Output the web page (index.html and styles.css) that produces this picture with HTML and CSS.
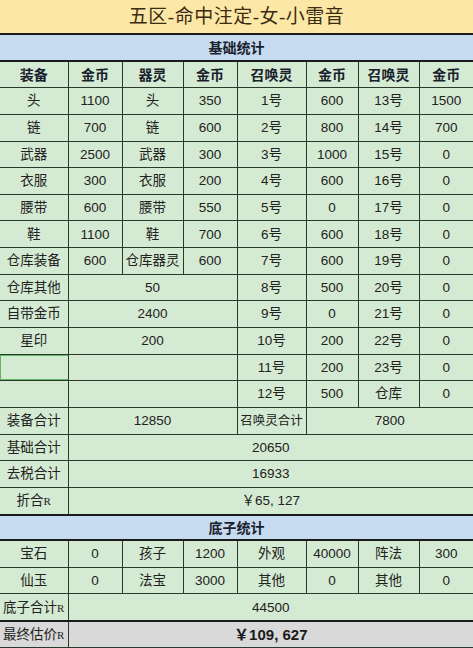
FILE: index.html
```html
<!DOCTYPE html>
<html lang="zh">
<head>
<meta charset="utf-8">
<title>五区-命中注定-女-小雷音</title>
<link rel="stylesheet" href="styles.css">
</head>
<body>
<table class="sheet">
<colgroup>
<col class="c68"><col class="c54"><col class="c61"><col class="c54"><col class="c69"><col class="c52"><col class="c61"><col class="c54">
</colgroup>
<tbody>
<tr class="r-title"><td colspan="8" class="title">五区-命中注定-女-小雷音</td></tr>
<tr class="r-sec"><td colspan="8" class="sec">基础统计</td></tr>
<tr class="r head"><td>装备</td><td>金币</td><td>器灵</td><td>金币</td><td>召唤灵</td><td>金币</td><td>召唤灵</td><td>金币</td></tr>
<tr class="r"><td>头</td><td>1100</td><td>头</td><td>350</td><td>1号</td><td>600</td><td>13号</td><td>1500</td></tr>
<tr class="r"><td>链</td><td>700</td><td>链</td><td>600</td><td>2号</td><td>800</td><td>14号</td><td>700</td></tr>
<tr class="r"><td>武器</td><td>2500</td><td>武器</td><td>300</td><td>3号</td><td>1000</td><td>15号</td><td>0</td></tr>
<tr class="r"><td>衣服</td><td>300</td><td>衣服</td><td>200</td><td>4号</td><td>600</td><td>16号</td><td>0</td></tr>
<tr class="r"><td>腰带</td><td>600</td><td>腰带</td><td>550</td><td>5号</td><td>0</td><td>17号</td><td>0</td></tr>
<tr class="r"><td>鞋</td><td>1100</td><td>鞋</td><td>700</td><td>6号</td><td>600</td><td>18号</td><td>0</td></tr>
<tr class="r"><td>仓库装备</td><td>600</td><td>仓库器灵</td><td>600</td><td>7号</td><td>600</td><td>19号</td><td>0</td></tr>
<tr class="r"><td>仓库其他</td><td colspan="3">50</td><td>8号</td><td>500</td><td>20号</td><td>0</td></tr>
<tr class="r"><td>自带金币</td><td colspan="3">2400</td><td>9号</td><td>0</td><td>21号</td><td>0</td></tr>
<tr class="r"><td>星印</td><td colspan="3">200</td><td>10号</td><td>200</td><td>22号</td><td>0</td></tr>
<tr class="r"><td class="sel"></td><td colspan="3"></td><td>11号</td><td>200</td><td>23号</td><td>0</td></tr>
<tr class="r"><td></td><td colspan="3"></td><td>12号</td><td>500</td><td>仓库</td><td>0</td></tr>
<tr class="r"><td>装备合计</td><td colspan="3">12850</td><td class="tight">召唤灵合计</td><td colspan="3">7800</td></tr>
<tr class="r"><td>基础合计</td><td colspan="7">20650</td></tr>
<tr class="r"><td>去税合计</td><td colspan="7">16933</td></tr>
<tr class="r"><td>折合<span class="rr">R</span></td><td colspan="7">￥65, 127</td></tr>
<tr class="r-sec2"><td colspan="8" class="sec">底子统计</td></tr>
<tr class="r"><td>宝石</td><td>0</td><td>孩子</td><td>1200</td><td>外观</td><td>40000</td><td>阵法</td><td>300</td></tr>
<tr class="r"><td>仙玉</td><td>0</td><td>法宝</td><td>3000</td><td>其他</td><td>0</td><td>其他</td><td>0</td></tr>
<tr class="r"><td>底子合计<span class="rr">R</span></td><td colspan="7">44500</td></tr>
<tr class="r final"><td>最终估价<span class="rr">R</span></td><td colspan="7" class="total">￥109, 627</td></tr>
</tbody>
</table>
</body>
</html>
```
FILE: styles.css
```css
html, body {
  margin: 0;
  padding: 0;
  background: #d5ead3;
}
.sheet {
  width: 473px;
  border-collapse: collapse;
  table-layout: fixed;
  font-family: "Liberation Sans", "Noto Sans CJK SC", sans-serif;
  font-size: 13.5px;
  color: #222;
}
.c68 { width: 68px; }
.c54 { width: 54px; }
.c61 { width: 61px; }
.c69 { width: 69px; }
.c52 { width: 52px; }
.sheet td {
  border: 1px solid #2a3a2a;
  padding: 0;
  text-align: center;
  vertical-align: middle;
  line-height: 1;
  white-space: nowrap;
  overflow: hidden;
  background: #d5ead3;
}
.sheet tr td:first-child { border-left: none; }
.sheet tr td:last-child { border-right: none; }
.r td { height: 25.65px; }
.r-title td {
  height: 33px;
  background: #fde7a7;
  border-top: none;
  border-bottom: 2px solid #1a1a1a;
  font-family: "Liberation Serif", "Noto Sans CJK SC", serif;
  font-size: 19px;
  color: #3a2c12;
  letter-spacing: 0.5px;
}
.sec {
  background: #c6daf0 !important;
  font-family: "Noto Sans CJK SC", sans-serif;
  font-weight: bold;
  font-size: 14px;
  color: #1a1f2e;
}
.r-sec td {
  height: 24.65px;
  border-bottom: 2px solid #1a1a1a;
}
.r-sec2 td {
  height: 23.65px;
  border-top: 2px solid #1a1a1a;
  border-bottom: 2px solid #1a1a1a;
}
.head td {
  font-family: "Noto Sans CJK SC", sans-serif;
  font-weight: bold;
  font-size: 14px;
  color: #1a1f2e;
}
.tight { font-size: 12.5px; }
.rr {
  font-family: "Liberation Serif", serif;
  font-size: 11px;
}
.sel {
  box-shadow: inset 1px 1px 0 #5fb85f, inset 0 -1px 0 #5fb85f;
}
.final td {
  background: #d9d9d9;
  border-top: 2px solid #1a1a1a;
  height: 24.65px;
}
.total {
  font-weight: bold;
  font-size: 15px;
  color: #1a1a1a;
}
```
